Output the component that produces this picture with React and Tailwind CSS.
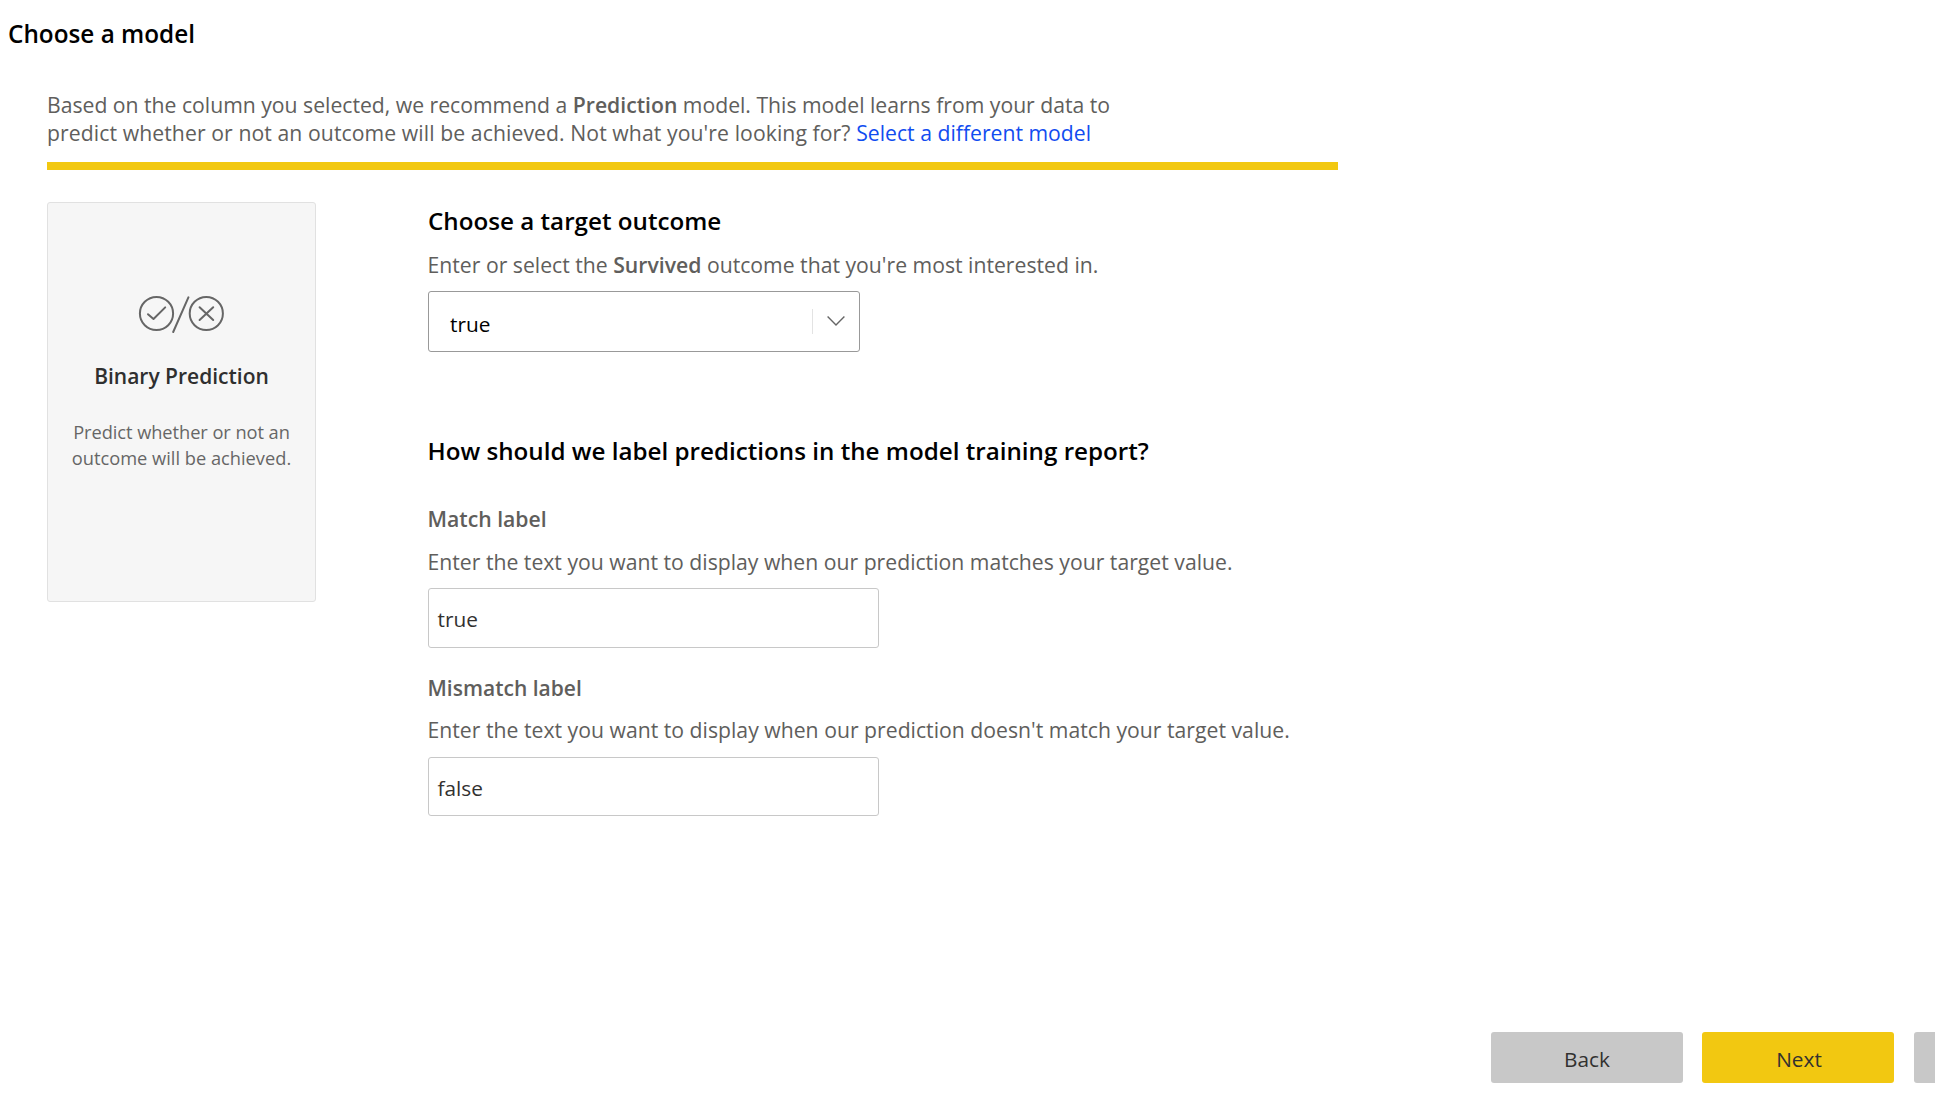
function PredictionIcon() {
  return (
    <svg
      className="mt-[92px] h-[38px] w-[88px] shrink-0"
      viewBox="0 0 88 38"
      fill="none"
      stroke="#666666"
      strokeWidth="2"
      strokeLinecap="round"
      strokeLinejoin="round"
    >
      <circle cx="18.5" cy="18.5" r="16.6" />
      <path d="M10 19.2 15.5 24 27.2 12.4" />
      <path d="M50.4 2.4 35.2 37" />
      <circle cx="68.3" cy="18.5" r="16.6" />
      <path d="M61.6 12.2 75.2 25M75.2 12.2 61.6 25" />
    </svg>
  );
}

function ModelCard() {
  return (
    <aside className="flex h-[400px] w-[269px] shrink-0 flex-col items-center rounded-[3px] border border-[#e1e1e1] bg-[#f6f6f6] text-center">
      <PredictionIcon />
      <h2 className="mt-[29px] text-[21px] leading-7 font-semibold text-[#2f2f2f]">
        Binary Prediction
      </h2>
      <p className="mt-[29px] text-[18.25px] leading-[26px] whitespace-nowrap text-[#666666]">
        <span className="tracking-[-0.06px]">Predict whether or not an</span>
        <br />
        outcome will be achieved.
      </p>
    </aside>
  );
}

function Select({ value }) {
  return (
    <div className="mt-3 flex h-[61px] w-[432px] items-center rounded-[3px] border border-[#999999] bg-white pl-[21px]">
      <span className="mt-[5px] flex-1 text-[20.8px] text-black">{value}</span>
      <span className="h-[25px] w-px bg-[#e3e3e3]" />
      <svg
        className="mr-[13px] mb-0.5 ml-[13px] h-3 w-5"
        viewBox="0 0 20 12"
        fill="none"
        stroke="#666666"
        strokeWidth="1.4"
      >
        <path d="M1.6 1.5 10 9.9 18.4 1.5" />
      </svg>
    </div>
  );
}

export default function App() {
  return (
    <main className="h-[1108px] w-full overflow-hidden bg-white font-['Open_Sans',sans-serif] text-[21.2px] leading-7 text-[#605e5c]">
      <h1 className="mt-[18px] ml-2 text-[24.3px] leading-8 font-semibold text-black">
        Choose a model
      </h1>

      <div className="ml-[47px]">
        <p className="mt-[41px] whitespace-nowrap">
          <span className="tracking-[-0.01px]">
            Based on the column you selected, we recommend a{" "}
            <b className="font-semibold">Prediction</b> model. This model learns from your data to
          </span>
          <br />
          <span className="tracking-[0.08px]">
            predict whether or not an outcome will be achieved. Not what you're looking for?{" "}
          </span>
          <a className="text-[#114cf0]">Select a different model</a>
        </p>
        <div className="mt-[15px] h-2 w-[1291px] bg-[#f2c811]" />

        <div className="mt-8 flex gap-28">
          <ModelCard />

          <section className="flex flex-col whitespace-nowrap">
            <h2 className="mt-[3px] text-[24.2px] leading-8 font-semibold text-black">
              Choose a target outcome
            </h2>
            <p className="mt-[14px] -ml-[0.5px]">
              Enter or select the <b className="font-semibold">Survived</b> outcome that you're
              most interested in.
            </p>
            <Select value="true" />

            <h2 className="mt-[83px] -ml-[0.5px] text-[24.2px] leading-8 font-semibold text-black">
              How should we label predictions in the model training report?
            </h2>

            <h3 className="mt-[38px] -ml-[0.5px] font-semibold">Match label</h3>
            <p className="mt-[15px] -ml-[0.5px]">
              Enter the text you want to display when our prediction matches your target value.
            </p>
            <div className="mt-3 flex h-[60px] w-[451px] items-center rounded-[3px] border border-[#c8c8c8] pt-0.5 pl-[8.5px] text-[20.8px] text-[#323130]">
              true
            </div>

            <h3 className="mt-[26px] -ml-[0.5px] text-[21px] font-semibold">Mismatch label</h3>
            <p className="mt-[14px] -ml-[0.5px] tracking-[0.01px]">
              Enter the text you want to display when our prediction doesn't match your target
              value.
            </p>
            <div className="mt-[13px] flex h-[59px] w-[451px] items-center rounded-[3px] border border-[#c8c8c8] pt-0.5 pl-[8.5px] text-[20.8px] text-[#323130]">
              false
            </div>
          </section>
        </div>
      </div>

      <footer className="mt-[216px] ml-[1491px] flex gap-[19px] text-[20.8px] text-[#323130]">
        <button className="h-[51px] w-48 shrink-0 rounded-[3px] bg-[#c8c8c8] pt-[3px]">Back</button>
        <button className="h-[51px] w-48 shrink-0 rounded-[3px] bg-[#f2c811] pt-[3px] pl-0.5">Next</button>
        <button aria-label="Cancel" className="ml-px h-[51px] w-48 shrink-0 rounded-[3px] bg-[#c8c8c8]" />
      </footer>
    </main>
  );
}
